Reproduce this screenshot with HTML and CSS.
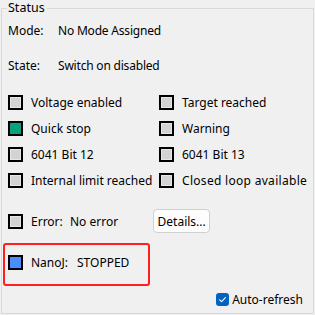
FILE: index.html
```html
<!DOCTYPE html>
<html>
<head>
<meta charset="utf-8">
<link rel="stylesheet" href="styles.css">
</head>
<body>
<fieldset class="group">
  <legend class="group-title">Status</legend>
  <div class="info-row info-mode"><span class="info-key">Mode:</span><span class="info-val">No Mode Assigned</span></div>
  <div class="info-row info-state"><span class="info-key">State:</span><span class="info-val">Switch on disabled</span></div>
  <div class="flags">
    <div class="flag"><span class="led"></span><span>Voltage enabled</span></div>
    <div class="flag"><span class="led"></span><span>Target reached</span></div>
    <div class="flag"><span class="led led-green"></span><span>Quick stop</span></div>
    <div class="flag"><span class="led"></span><span>Warning</span></div>
    <div class="flag"><span class="led"></span><span>6041 Bit 12</span></div>
    <div class="flag"><span class="led"></span><span>6041 Bit 13</span></div>
    <div class="flag"><span class="led"></span><span>Internal limit reached</span></div>
    <div class="flag"><span class="led"></span><span class="wide">Closed loop available</span></div>
  </div>
  <div class="error-row">
    <span class="led"></span><span class="err-key">Error:</span><span class="err-val">No error</span>
    <button class="btn">Details...</button>
  </div>
  <div class="nanoj">
    <span class="led led-blue"></span><span class="nj-key">NanoJ:</span><span>STOPPED</span>
  </div>
  <div class="auto-row">
    <span class="check"><svg width="13" height="13" viewBox="0 0 13 13"><path d="M3.6 6.8 L5.6 8.7 L9.4 4.6" fill="none" stroke="#fff" stroke-width="1.1" stroke-linecap="round" stroke-linejoin="round"/></svg></span>
    <span>Auto-refresh</span>
  </div>
</fieldset>
</body>
</html>
```
FILE: styles.css
```css
html, body {
  margin: 0;
  padding: 0;
  background: #f0f0f0;
}
body {
  width: 315px;
  height: 315px;
  overflow: hidden;
  font-family: "Noto Sans", "Liberation Sans", sans-serif;
  font-size: 12px;
  color: #000;
}
.group {
  margin: 0 0 0 1px;
  width: 313px;
  height: 314px;
  box-sizing: border-box;
  border: 1px solid #d9d9d9;
  padding: 0 0 0 6px;
  display: flex;
  flex-direction: column;
}
.group-title {
  margin-left: -1px;
  padding: 0 2px 0 1px;
  height: 16px;
  line-height: 16px;
  font-size: 12.5px;
  color: #000;
}
.info-row {
  display: flex;
  height: 20px;
  line-height: 20px;
}
.info-mode { margin-top: 5px; }
.info-state { margin-top: 15px; }
.info-key { width: 50px; }
.info-val { letter-spacing: -0.2px; }
.flags {
  margin-top: 13px;
  display: grid;
  grid-template-columns: 151px 1fr;
  grid-auto-rows: 26px;
}
.flag {
  display: flex;
  align-items: center;
  gap: 8px;
}
.wide { letter-spacing: 0.3px; }
.led {
  width: 15px;
  height: 15px;
  box-sizing: border-box;
  border: 2px solid #000;
  background: #d3d3d3;
  box-shadow: inset 0 0 0 1px #e6e6e6;
  flex: none;
}
.led-green { background: #0aa07f; box-shadow: none; }
.led-blue { background: #4a8dfc; box-shadow: none; }
.error-row {
  margin-top: 16px;
  height: 24px;
  display: flex;
  align-items: center;
}
.error-row .led { margin-right: 8px; }
.err-key { width: 39px; }
.btn {
  margin-left: 35px;
  width: 57px;
  height: 24px;
  padding: 0;
  background: #fdfdfd;
  border: 1px solid #d0d0d0;
  border-radius: 4px;
  font-family: inherit;
  font-size: 12px;
  color: #000;
}
.nanoj {
  margin: 10px 0 0 -5px;
  width: 147px;
  height: 43px;
  box-sizing: border-box;
  border: 2px solid #ff1f1f;
  border-radius: 3px;
  padding: 0 0 4px 3px;
  display: flex;
  align-items: center;
}
.nanoj .led { margin-right: 8px; }
.nj-key { width: 46px; }
.auto-row {
  margin-top: 6px;
  align-self: flex-end;
  margin-right: 10px;
  display: flex;
  align-items: center;
  gap: 3px;
  height: 14px;
}
.check {
  width: 13px;
  height: 13px;
  border-radius: 3px;
  background: #0063c2;
  display: flex;
}
```
